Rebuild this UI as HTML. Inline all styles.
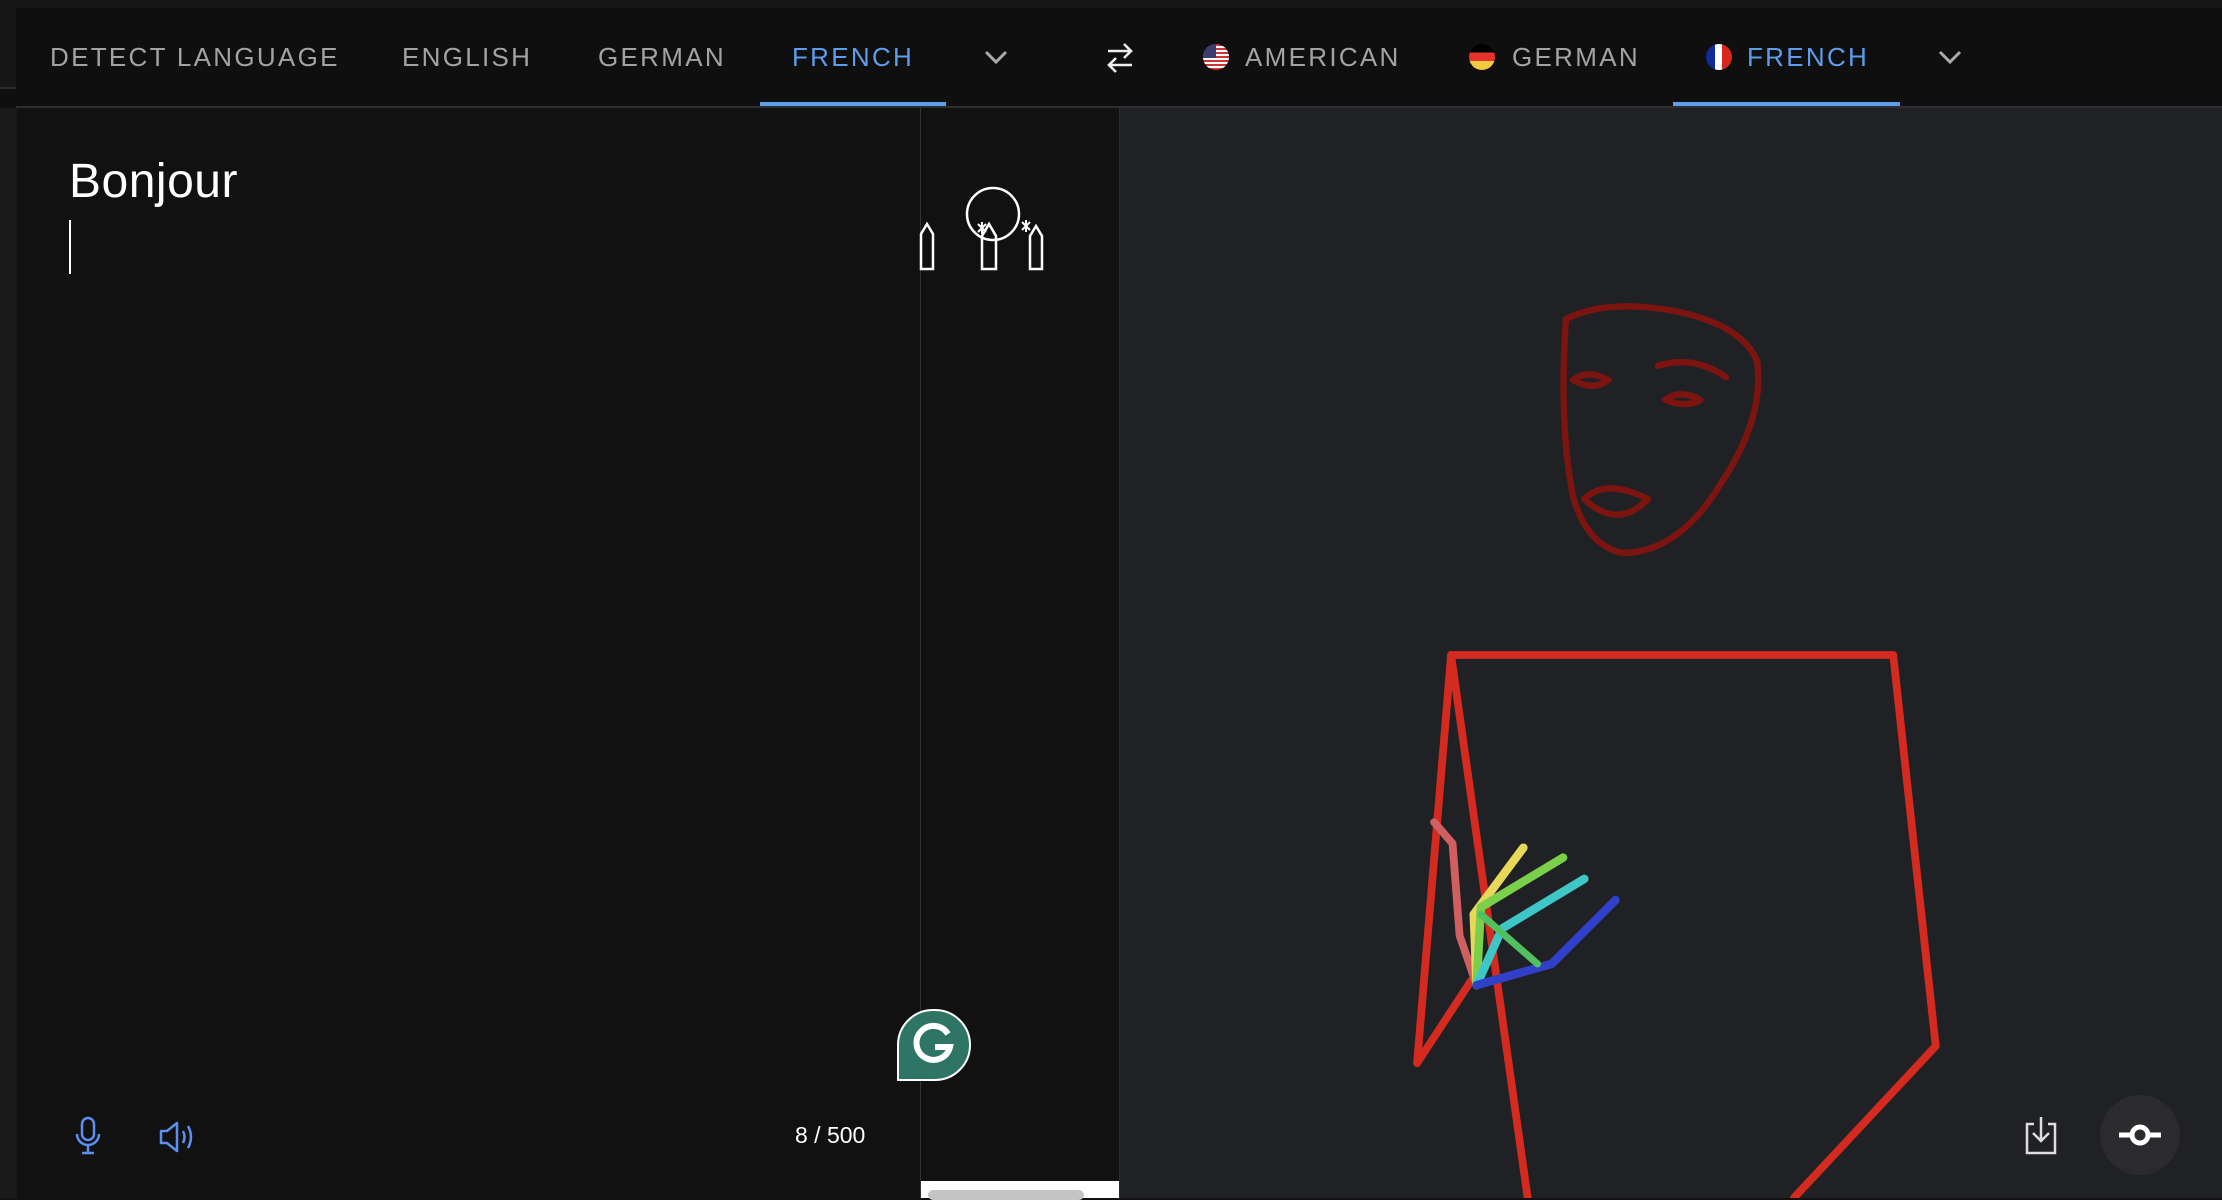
<!DOCTYPE html>
<html><head><meta charset="utf-8"><style>
body{margin:0;width:2222px;height:1198px;overflow:hidden;background:#111;font-family:"Liberation Sans",sans-serif;position:relative}
.a{position:absolute}
.tab{position:absolute;top:40px;font-size:26px;letter-spacing:2.3px;color:#a3a3a3;line-height:34px}
.act{color:#5c9ded}
.flag{position:absolute;top:44px;width:26px;height:26px;border-radius:50%;overflow:hidden}
</style></head><body>
<div class="a" style="left:0;top:0;width:2222px;height:106px;background:#0f0f0f"></div>
<div class="a" style="left:0;top:0;width:2222px;height:8px;background:#171717"></div>
<div class="a" style="left:0;top:0;width:16px;height:88px;background:#171717"></div>
<div class="a" style="left:0;top:87px;width:16px;height:2px;background:#2a2a2a"></div>
<div class="a" style="left:16px;top:106px;width:2206px;height:2px;background:#2e2e2e"></div>
<div class="tab" style="left:50px">DETECT LANGUAGE</div>
<div class="tab" style="left:402px">ENGLISH</div>
<div class="tab" style="left:598px">GERMAN</div>
<div class="tab act" style="left:792px">FRENCH</div>
<div class="a" style="left:760px;top:102px;width:186px;height:4px;background:#5c9ded"></div>
<svg class="a" style="left:982px;top:46px" width="28" height="22" viewBox="0 0 28 22"><path d="M4 6l10 10 10-10" stroke="#aaa" stroke-width="3" fill="none"/></svg>
<svg class="a" style="left:1104px;top:40px" width="32" height="36" viewBox="0 0 32 36"><path d="M4 11h22M20 4l7 7-7 7M28 25H6M12 18l-7 7 7 7" stroke="#eee" stroke-width="2.6" fill="none"/></svg>
<div class="flag" style="left:1203px;background:repeating-linear-gradient(#c33 0 2px,#fff 2px 4px)"><div style="width:13px;height:14px;background:#3c3b6e"></div></div>
<div class="tab" style="left:1245px">AMERICAN</div>
<div class="flag" style="left:1469px;background:linear-gradient(#000 0 33%,#e4332a 33% 66%,#f5c842 66%)"></div>
<div class="tab" style="left:1512px">GERMAN</div>
<div class="flag" style="left:1706px;background:linear-gradient(90deg,#102a9c 0 35%,#fff 35% 62%,#d8281e 62%)"></div>
<div class="tab act" style="left:1747px">FRENCH</div>
<div class="a" style="left:1673px;top:102px;width:227px;height:4px;background:#5c9ded"></div>
<svg class="a" style="left:1936px;top:46px" width="28" height="22" viewBox="0 0 28 22"><path d="M4 6l10 10 10-10" stroke="#aaa" stroke-width="3" fill="none"/></svg>

<div class="a" style="left:0;top:108px;width:17px;height:1090px;background:#1a1a1a"></div>
<div class="a" style="left:920px;top:108px;width:1px;height:1090px;background:#333"></div>
<div class="a" style="left:1119px;top:108px;width:1px;height:1090px;background:#2a2a2a"></div>
<div class="a" style="left:1120px;top:108px;width:1102px;height:1090px;background:#202124"></div>
<div class="a" style="left:69px;top:154px;font-size:48px;color:#fff;letter-spacing:0.5px">Bonjour</div>
<div class="a" style="left:69px;top:220px;width:2px;height:54px;background:#fff"></div>
<svg class="a" style="left:918px;top:184px" width="140" height="90" viewBox="0 0 140 90">
<g stroke="#fff" stroke-width="2.5" fill="none"><path d="M3 85V50l6-10 6 10v35z"/><circle cx="75" cy="30" r="26"/><path d="M64 85V52l7-12 7 12v33z"/><path d="M112 85V52l6-10 6 10v33z"/><path d="M60 40l8 8M68 40l-8 8M64 38v12M104 38l8 8M112 38l-8 8M108 36v12" stroke-width="2"/></g></svg>
<div class="a" style="left:897px;top:1009px;width:74px;height:72px;background:#2f7565;border:2px solid #fff;border-radius:38px 38px 38px 0;box-sizing:border-box"></div>
<svg class="a" style="left:908px;top:1018px" width="52" height="52" viewBox="0 0 52 52"><path d="M40 16A17 17 0 1 0 42 29H27" stroke="#fff" stroke-width="6" fill="none"/></svg>
<svg class="a" style="left:74px;top:1116px" width="28" height="40" viewBox="0 0 28 40"><rect x="8" y="2" width="12" height="22" rx="6" stroke="#5b8ff0" stroke-width="2.5" fill="none"/><path d="M3 18a11 11 0 0 0 22 0M14 29v8M8 37h12" stroke="#5b8ff0" stroke-width="2.5" fill="none"/></svg>
<svg class="a" style="left:158px;top:1120px" width="40" height="34" viewBox="0 0 40 34"><path d="M3 11h6l10-8v28l-10-8H3z" stroke="#5b8ff0" stroke-width="2.5" fill="none" stroke-linejoin="round"/><path d="M25 11q3 6 0 12M30 6q6 11 0 22" stroke="#5b8ff0" stroke-width="2.5" fill="none"/></svg>
<div class="a" style="left:795px;top:1122px;font-size:23px;color:#fff">8 / 500</div>
<div class="a" style="left:921px;top:1181px;width:198px;height:17px;background:#fff"></div>
<div class="a" style="left:928px;top:1190px;width:156px;height:10px;background:#c4c4c4;border-radius:5px"></div>

<svg class="a" style="left:0;top:0" width="2222" height="1198" viewBox="0 0 1568 845">
<g fill="none" stroke-linecap="round" stroke-linejoin="round">
<path d="M1105 225q30-15 80-5q45 10 55 35q5 40-25 85q-30 50-70 50q-25-5-35-40q-10-50-5-125z" stroke="#7c1410" stroke-width="4.5"/>
<path d="M1110 268q10-8 25 0q-10 8-25 0M1170 258q25-8 48 8M1175 282q10-8 25 0q-10 6-25 0M1118 352q15-15 45 0q-22 22-45 0" stroke="#7c1410" stroke-width="4.5"/>
<path d="M1078 845L1024 462H1336L1366 738L1266 845" stroke="#d42a20" stroke-width="5.5"/>
<path d="M1024 462L1000 750L1038 692" stroke="#d42a20" stroke-width="5.5"/>
<path d="M1012 580L1025 595L1030 660L1042 695" stroke="#d06060" stroke-width="5.5"/>
<path d="M1042 695L1040 645L1075 598" stroke="#e8d85a" stroke-width="6"/>
<path d="M1042 695L1045 640L1103 605" stroke="#7ad04a" stroke-width="6"/>
<path d="M1042 695L1060 655L1118 620" stroke="#3fc7c7" stroke-width="6"/>
<path d="M1042 695L1095 680L1140 635" stroke="#3040c8" stroke-width="6"/>
<path d="M1045 645L1085 680" stroke="#50c060" stroke-width="5"/>
</g></svg>
<svg class="a" style="left:2024px;top:1114px" width="34" height="42" viewBox="0 0 34 42"><path d="M10 10H3v29h28V10h-7M17 3v24M9 19l8 8 8-8" stroke="#ddd" stroke-width="2.5" fill="none"/></svg>
<div class="a" style="left:2100px;top:1095px;width:80px;height:80px;border-radius:50%;background:#2b2b2d"></div>
<svg class="a" style="left:2115px;top:1120px" width="50" height="30" viewBox="0 0 50 30"><path d="M4 15h42" stroke="#fff" stroke-width="5"/><circle cx="25" cy="15" r="8" stroke="#fff" stroke-width="5" fill="#2b2b2d"/></svg>
</body></html>
